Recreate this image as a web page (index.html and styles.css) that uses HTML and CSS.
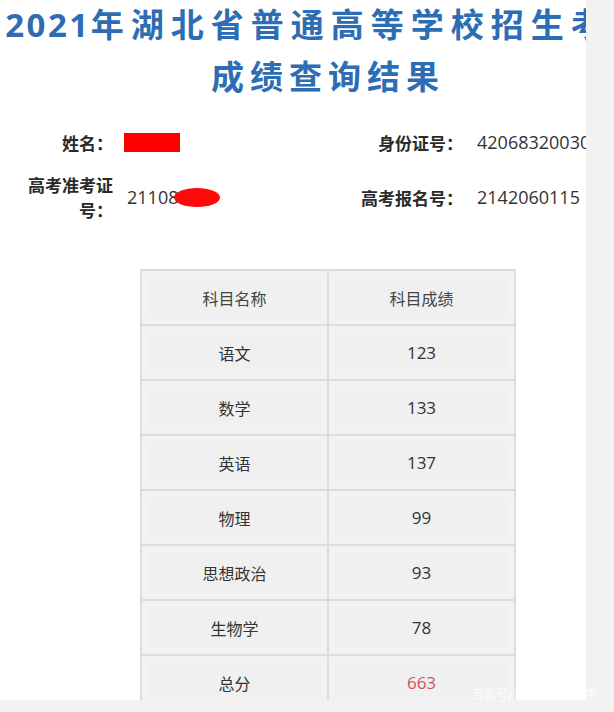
FILE: index.html
```html
<!DOCTYPE html>
<html lang="zh-CN">
<head>
<meta charset="utf-8">
<title>成绩查询结果</title>
<link rel="stylesheet" href="styles.css">
</head>
<body>
<div class="page">
  <div class="content">
    <h1 class="title">
      <span class="line line-main"><span class="digits">2021</span>年湖北省普通高等学校招生考试</span>
      <span class="line">成绩查询结果</span>
    </h1>

    <div class="info">
      <div class="label">姓名：</div>
      <div class="value"><span class="redact-box"></span></div>
      <div class="label">身份证号：</div>
      <div class="value num">42068320030</div>

      <div class="label">高考准考证号：</div>
      <div class="value num">21108<span class="redact-pill"></span></div>
      <div class="label">高考报名号：</div>
      <div class="value num">2142060115</div>
    </div>

    <table class="scores">
      <thead>
        <tr><th>科目名称</th><th>科目成绩</th></tr>
      </thead>
      <tbody>
        <tr><td>语文</td><td class="num">123</td></tr>
        <tr><td>数学</td><td class="num">133</td></tr>
        <tr><td>英语</td><td class="num">137</td></tr>
        <tr><td>物理</td><td class="num">99</td></tr>
        <tr><td>思想政治</td><td class="num">93</td></tr>
        <tr><td>生物学</td><td class="num">78</td></tr>
        <tr><td>总分</td><td class="num total">663</td></tr>
      </tbody>
    </table>
  </div>
</div>
<div class="watermark">百家号/湖北新高考升学</div>
</body>
</html>
```

FILE: styles.css
```css
html, body {
  margin: 0;
  padding: 0;
}

body {
  background: #f2f2f2;
  width: 614px;
  height: 712px;
  overflow: hidden;
  position: relative;
  font-family: "Noto Sans CJK SC", sans-serif;
  color: #333;
}

.page {
  width: 586px;
  height: 700px;
  background: #fff;
  overflow: hidden;
}

.content {
  width: 656px;
}

.title {
  margin: -2px 0 0 0;
  text-align: center;
  font-size: 33px;
  line-height: 50px;
  font-weight: 700;
  letter-spacing: 6px;
  color: #2c6db3;
  white-space: nowrap;
}

.title .line {
  display: block;
}

.title .line-main {
  letter-spacing: 7px;
}

.title .digits {
  font-family: "Noto Sans", "Noto Sans CJK SC", sans-serif;
  letter-spacing: 2.5px;
}

.info {
  margin-top: 30px;
  padding-left: 23px;
  display: grid;
  grid-template-columns: 90px 204px 118px 1fr;
  column-gap: 14px;
  row-gap: 17px;
  align-items: center;
  line-height: 25px;
}

.label {
  font-size: 17px;
  font-weight: 700;
  text-align: right;
  color: #2a2a2a;
}

.value {
  white-space: nowrap;
  display: flex;
  align-items: center;
}

.num {
  font-family: "Open Sans", "Noto Sans", sans-serif;
  font-size: 18px;
  color: #333;
}

.redact-box {
  display: inline-block;
  width: 56px;
  height: 19px;
  margin-left: -3px;
  background: #ff0000;
}

.redact-pill {
  display: inline-block;
  width: 46px;
  height: 19px;
  margin-left: -4px;
  border-radius: 50%;
  background: #ff0a0a;
}

.scores {
  margin: 47px auto 0;
  width: 376px;
  border-collapse: collapse;
  background: #f0f0f0;
  border: 2px solid #d8d8d8;
}

.scores th,
.scores td {
  border: 2px solid #dcdcdc;
  height: 53px;
  padding: 0;
  text-align: center;
  font-size: 16px;
  font-weight: 400;
  color: #333;
  box-shadow: inset 0 0 0 6px #f2f2f2;
}

.scores th {
  height: 53px;
  color: #444;
}

.scores th:first-child,
.scores td:first-child {
  width: 185px;
}

.scores td.num {
  font-size: 17px;
}

.scores td.total {
  color: #d4505f;
}

.watermark {
  position: absolute;
  left: 472px;
  top: 686px;
  font-size: 12px;
  line-height: 16px;
  color: rgba(255, 255, 255, 0.9);
  white-space: nowrap;
}
```
